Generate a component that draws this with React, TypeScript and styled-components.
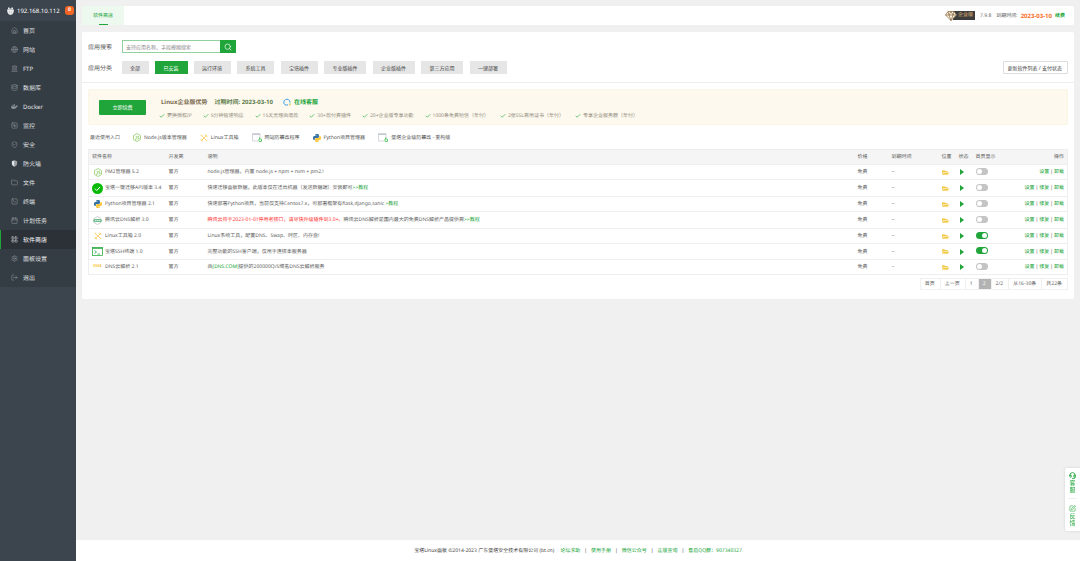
import React from 'react';
import styled, { createGlobalStyle } from 'styled-components';
import {
  House, Globe, Landmark, Database, SquareActivity, ShieldCheck, Folder, SquareTerminal,
  Calendar, LayoutGrid, Settings, LogOut, Search, Check, SquarePen, Headset,
} from 'lucide-react';
import { FaDocker, FaFolderOpen } from 'react-icons/fa';

const GREEN = '#20a53a';

const GlobalStyle = createGlobalStyle`
  * { box-sizing: border-box; }
  body {
    margin: 0;
    background: #f0f0f0;
    color: #5e5e5e;
    font: 5px/8px "Noto Sans", "Noto Sans CJK SC", sans-serif;
    text-rendering: geometricPrecision;
  }
  button, input { font: inherit; color: inherit; margin: 0; padding: 0; }
  a { color: inherit; text-decoration: none; }
  svg { flex: none; display: block; }
`;

const Shell = styled.div`
  display: flex;
  min-height: 100vh;
`;

const Sidebar = styled.aside`
  flex: none;
  width: 76px;
  background: #3c444d;
`;

const Host = styled.div`
  display: flex;
  align-items: center;
  justify-content: space-between;
  height: 21px;
  padding: 0 2px 0 7px;
  color: #fff;
  font-size: 6px;
`;

const HostName = styled.span`
  display: flex;
  align-items: center;
  gap: 3px;
`;

const Count = styled.span`
  width: 9px;
  height: 9px;
  border-radius: 3px;
  background: #f26522;
  font-weight: bold;
  font-size: 5px;
  line-height: 9px;
  text-align: center;
`;

const Menu = styled.nav`
  display: flex;
  flex-direction: column;
  background: #353d44;
`;

const MenuLink = styled.a<{ $active?: boolean }>`
  display: flex;
  align-items: center;
  gap: 5px;
  height: 19px;
  padding-left: 10px;
  border-left: 1px solid ${p => (p.$active ? GREEN : 'transparent')};
  background: ${p => (p.$active ? '#2c3138' : 'transparent')};
  color: ${p => (p.$active ? '#fff' : '#e0e3e5')};
  font-size: 6px;
  svg { color: ${p => (p.$active ? '#c8ccd0' : '#8b939a')}; }
`;

const Content = styled.div`
  flex: 1;
  min-width: 0;
  display: flex;
  flex-direction: column;
`;

const Main = styled.main`
  flex: 1;
  padding: 6px;
`;

const TopBar = styled.header`
  display: flex;
  align-items: center;
  justify-content: space-between;
  height: 19px;
  padding-right: 9px;
  border-radius: 2px;
  background: #fff;
`;

const Tab = styled.a`
  display: flex;
  flex-direction: column;
  align-items: center;
  justify-content: space-between;
  width: 42px;
  height: 19px;
  padding-top: 6px;
  background: #edf8ef;
  color: ${GREEN};
  &::after { content: ''; width: 9px; height: 1px; background: ${GREEN}; }
`;

const License = styled.div`
  display: flex;
  align-items: center;
  gap: 5px;
`;

const Edition = styled.span`
  display: flex;
  align-items: center;
  svg { z-index: 1; }
`;

const EditionName = styled.span`
  height: 9px;
  padding: 0 2px 0 5px;
  margin-left: -4px;
  background: #3d3d3d;
  color: #e0b873;
  line-height: 9px;
`;

const Expiry = styled.span`
  display: flex;
  align-items: center;
  gap: 3px;
  b { color: #fc6d26; font-size: 6px; }
  a { color: ${GREEN}; font-weight: bold; }
`;

const Panel = styled.section`
  margin-top: 7px;
  padding: 8px 0 9px;
  border-radius: 2px;
  background: #fff;
`;

const Filter = styled.div`
  display: flex;
  align-items: center;
  height: 13px;
  margin: 0 6px 8px;
`;

const FilterLabel = styled.label`
  flex: none;
  width: 34px;
  color: #555;
  font-size: 6px;
`;

const SearchBox = styled.form`
  display: flex;
  height: 13px;
`;

const SearchInput = styled.input`
  width: 98px;
  padding: 0 3px;
  border: 1px solid #90d29d;
  border-right: 0;
  outline: 0;
  &::placeholder { color: #888; opacity: 1; }
`;

const SearchButton = styled.button`
  display: grid;
  place-items: center;
  width: 16px;
  border: 0;
  background: ${GREEN};
  color: #fff;
`;

const Categories = styled.div`
  display: flex;
  justify-content: space-between;
  flex: 0 1 385px;
`;

const Category = styled.button<{ $active?: boolean }>`
  height: 13px;
  padding: 0 9px 0 8px;
  border: 0;
  background: ${p => (p.$active ? GREEN : '#e6e6e6')};
  color: ${p => (p.$active ? '#fff' : '#444')};
  white-space: nowrap;
`;

const RefreshButton = styled.button`
  height: 13px;
  margin-left: auto;
  padding: 0 5px 0 4px;
  border: 1px solid #ddd;
  border-radius: 1px;
  background: #fff;
  color: #444;
  white-space: nowrap;
`;

const Body = styled.div`
  padding: 6px 6px 0;
  border-top: 1px solid #eee;
`;

const Banner = styled.div`
  display: flex;
  align-items: center;
  gap: 12px;
  height: 36px;
  padding: 0 10px;
  border: 1px solid #fbf5e3;
  border-radius: 2px;
  background: #fdf9ee;
`;

const BannerText = styled.div`
  padding-top: 3px;
`;

const RenewButton = styled.button`
  width: 47px;
  height: 15px;
  border: 0;
  border-radius: 1px;
  background: ${GREEN};
  color: #fff;
`;

const BannerTitle = styled.div`
  display: flex;
  align-items: center;
  gap: 7px;
  height: 8px;
  margin-bottom: 6px;
  padding-left: 3px;
  color: #7a6a50;
  font-size: 6px;
  font-weight: bold;
`;

const Due = styled.span`
  color: #5c7c4c;
`;

const Support = styled.a`
  display: flex;
  align-items: center;
  gap: 3px;
  padding-left: 3px;
  color: ${GREEN};
`;

const Benefits = styled.ul`
  display: flex;
  gap: 11px;
  margin: 0;
  padding: 0 0 0 1px;
  list-style: none;
  color: #928d80;
  white-space: nowrap;
`;

const Benefit = styled.li`
  display: flex;
  align-items: center;
  gap: 2px;
  svg { color: #3fb854; }
`;

const Recent = styled.div`
  display: flex;
  align-items: center;
  gap: 13px;
  height: 24px;
  padding: 1px 0 0 2px;
`;

const RecentLink = styled.a`
  display: flex;
  align-items: center;
  gap: 3px;
  color: #555;
`;

const Table = styled.table`
  width: 100%;
  table-layout: fixed;
  border-collapse: collapse;
  border: 1px solid #eee;
  th, td {
    padding: 0 3px;
    border-bottom: 1px solid #eee;
    font-weight: normal;
    text-align: left;
    white-space: nowrap;
    vertical-align: middle;
  }
  th { background: #f5f5f5; }
  th:last-child, td:last-child { text-align: right; }
`;

const Col = styled.col<{ $width?: number }>`
  width: ${p => (p.$width ? `${p.$width}px` : 'auto')};
`;

const Row = styled.tr<{ $height: number }>`
  height: ${p => p.$height}px;
`;

const AppName = styled.a`
  display: flex;
  align-items: center;
  gap: 2px;
`;

const IconSlot = styled.span`
  display: flex;
  align-items: center;
  justify-content: center;
  flex: none;
  width: 11px;
`;

const DnsMark = styled.span`
  color: #f8c33c;
  font-size: 4px;
  font-weight: bold;
`;

const Warning = styled.span`
  color: #f33;
`;

const GreenLink = styled.a`
  color: ${GREEN};
`;

const Actions = styled.div`
  display: flex;
  justify-content: flex-end;
  gap: 1px;
`;

const FolderButton = styled.button`
  display: block;
  border: 0;
  background: none;
  color: #f3cd4f;
`;

const PlayButton = styled(FolderButton)`
  padding-left: 1px;
  color: ${GREEN};
`;

const Toggle = styled.input`
  appearance: none;
  display: flex;
  align-items: center;
  width: 12px;
  height: 7px;
  margin-bottom: 2px;
  padding: 1px;
  border-radius: 4px;
  background: #c4c4c4;
  &::before { content: ''; width: 5px; height: 5px; border-radius: 50%; background: #fff; }
  &:checked { justify-content: flex-end; background: ${GREEN}; }
`;

const Pager = styled.nav`
  display: flex;
  justify-content: flex-end;
  margin-top: 3px;
`;

const pagerCell = `
  height: 12px;
  padding: 0 5px 0 4px;
  border: 1px solid #f0f0f0;
  border-left-width: 0;
  line-height: 10px;
`;

const PageLink = styled.a`
  ${pagerCell}
  &:first-child { border-left-width: 1px; }
`;

const PageText = styled.span<{ $current?: boolean }>`
  ${pagerCell}
  background: ${p => (p.$current ? '#b3b3b3' : '#fff')};
  color: ${p => (p.$current ? '#fff' : 'inherit')};
`;

const Footer = styled.footer`
  display: flex;
  align-items: center;
  justify-content: center;
  gap: 6px;
  height: 21px;
  background: #fff;
  color: #444;
  a { color: ${GREEN}; }
`;

const FooterLinks = styled.span`
  display: flex;
  gap: 4px;
`;

const FloatBar = styled.aside`
  position: fixed;
  right: 0;
  bottom: 30px;
  display: flex;
  flex-direction: column;
  width: 15px;
  padding: 0 3px;
  border-radius: 2px 0 0 2px;
  background: #fff;
  box-shadow: 0 0 3px rgba(0, 0, 0, 0.12);
`;

const FloatButton = styled.button`
  display: flex;
  flex-direction: column;
  align-items: center;
  gap: 1px;
  padding: 4px 0;
  border: 0;
  background: none;
  color: ${GREEN};
  font-size: 6px;
  line-height: 7px;
  & + & { border-top: 1px solid #eee; padding-top: 6px; }
  span { width: 6px; }
`;

const BtLogo = () => (
  <svg width="7" height="8" viewBox="0 0 14 16" fill="#e8eaec">
    <path d="M2 1h3v2h4V1h3v4H2z" />
    <path d="M0 5h14l-1 6q-1 4-6 5q-5-1-6-5z" />
    <path d="M5 8v5M9 8v5" stroke="#b4babf" />
  </svg>
);

const HalfShield = () => (
  <svg width="7" height="7" viewBox="0 0 24 24">
    <path d="M12 1l9 3v8c0 6-4 9-9 11z" fill="#99a0a6" />
    <path d="M12 1L3 4v8c0 6 4 9 9 11z" fill="#e3e6e8" />
  </svg>
);

const NodeIcon = () => (
  <svg width="8" height="9" viewBox="0 0 16 18" fill="none" stroke="#8cc861" strokeWidth="1.500">
    <path d="M8 1l7 4v8l-7 4-7-4V5z" />
    <path d="M6.500 6v6q0 1-1.500 1H4M12 7q-3-1.500-3 .5T12 10t-3 2.200" />
  </svg>
);

const CheckIcon = () => (
  <svg width="11" height="11" viewBox="0 0 22 22">
    <circle cx="11" cy="11" r="11" fill="#09bb07" />
    <path d="M6 11.500l3.500 3.500L16 8" fill="none" stroke="#fff" strokeWidth="2" />
  </svg>
);

const SNAKE =
  'M14.25.18l.9.2.73.26.59.3.45.32.34.34.25.34.16.33.1.3.04.26.02.2-.01.13V8.5l-.05.63-.13.55-.21.46-.26.38-.3.31-.33.25-.35.19-.35.14-.33.1-.3.07-.26.04-.21.02H8.77l-.69.05-.59.14-.5.22-.41.27-.33.32-.27.35-.2.36-.15.37-.1.35-.07.32-.04.27-.02.21v3.06H3.17l-.21-.03-.28-.07-.32-.12-.35-.18-.36-.26-.36-.36-.35-.46-.32-.59-.28-.73-.21-.88-.14-1.05-.05-1.23.06-1.22.16-1.04.24-.87.32-.71.36-.57.4-.44.42-.33.42-.24.4-.16.36-.1.32-.05.24-.01h.16l.06.01h8.16v-.83H6.18l-.01-2.75-.02-.37.05-.34.11-.31.17-.28.25-.26.31-.23.38-.2.44-.18.51-.15.58-.12.64-.1.71-.06.77-.04.84-.02 1.27.05zm-6.3 1.98l-.23.33-.08.41.08.41.23.34.33.22.41.09.41-.09.33-.22.23-.34.08-.41-.08-.41-.23-.33-.33-.22-.41-.09-.41.09z';

const PythonIcon = () => (
  <svg width="8" height="8" viewBox="0 0 24 24">
    <path d={SNAKE} fill="#3673a5" />
    <path d={SNAKE} fill="#ffc83a" transform="rotate(180 12 12)" />
  </svg>
);

const DnsHexIcon = () => (
  <svg width="9" height="9" viewBox="0 0 18 18" fill="none">
    <path d="M2 6V5l7-4 7 4v1M2 12v1l7 4 7-4v-1" stroke="#9fa6a1" />
    <rect x="0" y="6" width="18" height="6" rx="3" fill="#6fbd90" />
    <path d="M3.500 9h3M7.500 9h3M11.500 9h3" stroke="#fff" strokeWidth="1.500" />
  </svg>
);

const ToolsIcon = () => (
  <svg width="8" height="8" viewBox="0 0 16 16" fill="none" stroke="#fcd373" strokeWidth="2">
    <path d="M2 2l12 12M14 2L2 14" />
    <path d="M1 4l3-3M12 15l3-3M11 1v4h4M1 11h4v4" strokeWidth="1.500" />
  </svg>
);

const TerminalIcon = () => (
  <svg width="11" height="9" viewBox="0 0 22 18" fill="none" stroke={GREEN} strokeWidth="1.500">
    <rect x="1" y="1" width="20" height="16" />
    <path d="M1 2.500h20" strokeWidth="2" />
    <path d="M5 7l4 3-4 3M11 14h5" />
  </svg>
);

const PageLockIcon = () => (
  <svg width="10" height="9" viewBox="0 0 20 18" fill="none">
    <path d="M12 16H1V1h15v9" stroke="#c6c8d2" strokeWidth="1.500" />
    <path d="M1 3h15" stroke="#c6c8d2" strokeWidth="2" />
    <rect x="14" y="12" width="5" height="5" rx="1" stroke="#4fc45e" strokeWidth="2" />
    <path d="M15 12V9" stroke="#4fc45e" strokeWidth="2" />
  </svg>
);

const DiamondIcon = () => (
  <svg width="12" height="10" viewBox="0 0 24 20" fill="#fff6e4" stroke="#8a6b45" strokeWidth="1.500">
    <path d="M6 1h12l5 7-11 11L1 8z" />
    <path d="M1 8h22M6 1l2 7 4 11 4-11 2-7M8 8l4-7 4 7" fill="none" />
  </svg>
);

const ChatIcon = () => (
  <svg width="8" height="8" viewBox="0 0 16 16" fill="none" strokeWidth="2">
    <path d="M4 13.500A6.200 6.200 0 1 1 14 8" stroke="#3a9be8" />
    <path d="M4 13.500q3 1.500 6 0" stroke="#3a9be8" />
    <path d="M14 9v2" stroke="#35b558" />
    <path d="M12 13.500h3" stroke="#f5a623" />
  </svg>
);

const PlayIcon = () => (
  <svg width="4" height="6" viewBox="0 0 4 6" fill="currentColor">
    <path d="M0 0l4 3-4 3z" />
  </svg>
);

const menu = [
  ['首页', <House size={7} />],
  ['网站', <Globe size={7} />],
  ['FTP', <Landmark size={7} />],
  ['数据库', <Database size={7} />],
  ['Docker', <FaDocker size={7} />],
  ['监控', <SquareActivity size={7} />],
  ['安全', <ShieldCheck size={7} />],
  ['防火墙', <HalfShield />],
  ['文件', <Folder size={7} />],
  ['终端', <SquareTerminal size={7} />],
  ['计划任务', <Calendar size={7} />],
  ['软件商店', <LayoutGrid size={7} />],
  ['面板设置', <Settings size={7} />],
  ['退出', <LogOut size={7} />],
] as [string, React.ReactNode][];

const categories = ['全部', '已安装', '运行环境', '系统工具', '宝塔插件', '专业版插件', '企业版插件', '第三方应用', '一键部署'];

const benefits = [
  '更换授权IP', '5分钟极速响应', '15天无理由退款', '30+款付费插件', '20+企业版专享功能',
  '1000条免费短信（年付）', '2张SSL商用证书（年付）', '专享企业服务群（年付）',
];

const recent = [
  ['Node.js版本管理器', <NodeIcon />],
  ['Linux工具箱', <ToolsIcon />],
  ['网站防篡改程序', <PageLockIcon />],
  ['Python项目管理器', <PythonIcon />],
  ['堡塔企业级防篡改 - 重构版', <PageLockIcon />],
] as [string, React.ReactNode][];

interface Plugin {
  name: string;
  icon: React.ReactNode;
  desc: React.ReactNode;
  height: number;
  actions?: string[];
  pinned?: boolean;
}

const plugins: Plugin[] = [
  {
    name: 'PM2管理器 5.2', icon: <NodeIcon />, height: 15, actions: ['设置', '卸载'],
    desc: 'node.js管理器，内置 node.js + npm + nvm + pm2.!',
  },
  {
    name: '宝塔一键迁移API版本 3.4', icon: <CheckIcon />, height: 17,
    desc: <>快速迁移面板数据，此版本仅在迁出机器（发送数据端）安装即可<GreenLink href="#">&gt;&gt;教程</GreenLink></>,
  },
  {
    name: 'Python项目管理器 2.1', icon: <PythonIcon />, height: 15,
    desc: <>快速部署Python项目，当前仅支持Centos7.x，可部署框架有flask,django,sanic <GreenLink href="#">&gt;教程</GreenLink></>,
  },
  {
    name: '腾讯云DNS解析 3.0', icon: <DnsHexIcon />, height: 17,
    desc: <><Warning>腾讯云将于2023-01-01停用老接口，请尽快升级插件到3.0+。</Warning>腾讯云DNS解析是国内最大的免费DNS解析产品提供商<GreenLink href="#">&gt;&gt;教程</GreenLink></>,
  },
  { name: 'Linux工具箱 2.0', icon: <ToolsIcon />, height: 15, pinned: true, desc: 'Linux系统工具，配置DNS、Swap、时区、内存盘!' },
  { name: '宝塔SSH终端 1.0', icon: <TerminalIcon />, height: 16, pinned: true, desc: '完整功能的SSH客户端，仅用于连接本服务器' },
  {
    name: 'DNS云解析 2.1', icon: <DnsMark>DNS</DnsMark>, height: 15,
    desc: <>由<GreenLink href="#">[DNS.COM]</GreenLink>提供的200000Q/S域名DNS云解析服务</>,
  },
];

const footerLinks = ['论坛求助', '使用手册', '微信公众号', '正版查询', '售后QQ群：907340327'];

export default function App() {
  return (
    <>
      <GlobalStyle />
      <Shell>
        <Sidebar>
          <Host>
            <HostName><BtLogo />192.168.10.112</HostName>
            <Count>0</Count>
          </Host>
          <Menu>
            {menu.map(([label, icon]) => (
              <MenuLink key={label} href="#" $active={label === '软件商店'}>{icon}{label}</MenuLink>
            ))}
          </Menu>
        </Sidebar>
        <Content>
          <Main>
            <TopBar>
              <Tab href="#">软件商店</Tab>
              <License>
                <Edition><DiamondIcon /><EditionName>企业版</EditionName></Edition>
                <span>7.9.8</span>
                <Expiry>到期时间: <b>2023-03-10</b><a href="#">续费</a></Expiry>
              </License>
            </TopBar>
            <Panel>
              <Filter>
                <FilterLabel htmlFor="app-search">应用搜索</FilterLabel>
                <SearchBox>
                  <SearchInput id="app-search" placeholder="支持应用名称、字段模糊搜索" />
                  <SearchButton type="button" aria-label="搜索"><Search size={8} /></SearchButton>
                </SearchBox>
              </Filter>
              <Filter>
                <FilterLabel as="span">应用分类</FilterLabel>
                <Categories>
                  {categories.map(c => <Category key={c} $active={c === '已安装'}>{c}</Category>)}
                </Categories>
                <RefreshButton>更新软件列表 / 支付状态</RefreshButton>
              </Filter>
              <Body>
                <Banner>
                  <RenewButton>立即续费</RenewButton>
                  <BannerText>
                    <BannerTitle>
                      Linux企业版优势
                      <Due>过期时间: 2023-03-10</Due>
                      <Support href="#"><ChatIcon />在线客服</Support>
                    </BannerTitle>
                    <Benefits>
                      {benefits.map(b => <Benefit key={b}><Check size={6} strokeWidth={3} />{b}</Benefit>)}
                    </Benefits>
                  </BannerText>
                </Banner>
                <Recent>
                  最近使用入口
                  {recent.map(([label, icon]) => <RecentLink key={label} href="#">{icon}{label}</RecentLink>)}
                </Recent>
                <Table>
                  <colgroup>
                    <Col $width={77} /><Col $width={39} /><Col /><Col $width={34} /><Col $width={50} />
                    <Col $width={17} /><Col $width={17} /><Col $width={40} /><Col $width={55} />
                  </colgroup>
                  <thead>
                    <Row $height={15}>
                      <th>软件名称</th><th>开发商</th><th>说明</th><th>价格</th><th>到期时间</th>
                      <th>位置</th><th>状态</th><th>首页显示</th><th>操作</th>
                    </Row>
                  </thead>
                  <tbody>
                    {plugins.map(p => (
                      <Row key={p.name} $height={p.height}>
                        <td><AppName href="#"><IconSlot>{p.icon}</IconSlot>{p.name}</AppName></td>
                        <td>官方</td>
                        <td>{p.desc}</td>
                        <td>免费</td>
                        <td>--</td>
                        <td><FolderButton aria-label="打开目录"><FaFolderOpen size={7} /></FolderButton></td>
                        <td><PlayButton aria-label="运行中"><PlayIcon /></PlayButton></td>
                        <td><Toggle type="checkbox" aria-label="首页显示" defaultChecked={p.pinned} /></td>
                        <td>
                          <Actions>
                            {(p.actions ?? ['设置', '修复', '卸载']).map((a, i) => (
                              <React.Fragment key={a}>{i > 0 && <span>|</span>}<GreenLink href="#">{a}</GreenLink></React.Fragment>
                            ))}
                          </Actions>
                        </td>
                      </Row>
                    ))}
                  </tbody>
                </Table>
                <Pager>
                  <PageLink href="#">首页</PageLink>
                  <PageLink href="#">上一页</PageLink>
                  <PageLink href="#">1</PageLink>
                  <PageText $current>2</PageText>
                  <PageText>2/2</PageText>
                  <PageText>从16-30条</PageText>
                  <PageText>共22条</PageText>
                </Pager>
              </Body>
            </Panel>
          </Main>
          <Footer>
            <span>宝塔Linux面板 ©2014-2023 广东堡塔安全技术有限公司 (bt.cn)</span>
            <FooterLinks>
              {footerLinks.map((l, i) => (
                <React.Fragment key={l}>{i > 0 && <span>|</span>}<a href="#">{l}</a></React.Fragment>
              ))}
            </FooterLinks>
          </Footer>
        </Content>
        <FloatBar>
          <FloatButton><Headset size={7} strokeWidth={3} /><span>客服</span></FloatButton>
          <FloatButton><SquarePen size={7} /><span>反馈</span></FloatButton>
        </FloatBar>
      </Shell>
    </>
  );
}
